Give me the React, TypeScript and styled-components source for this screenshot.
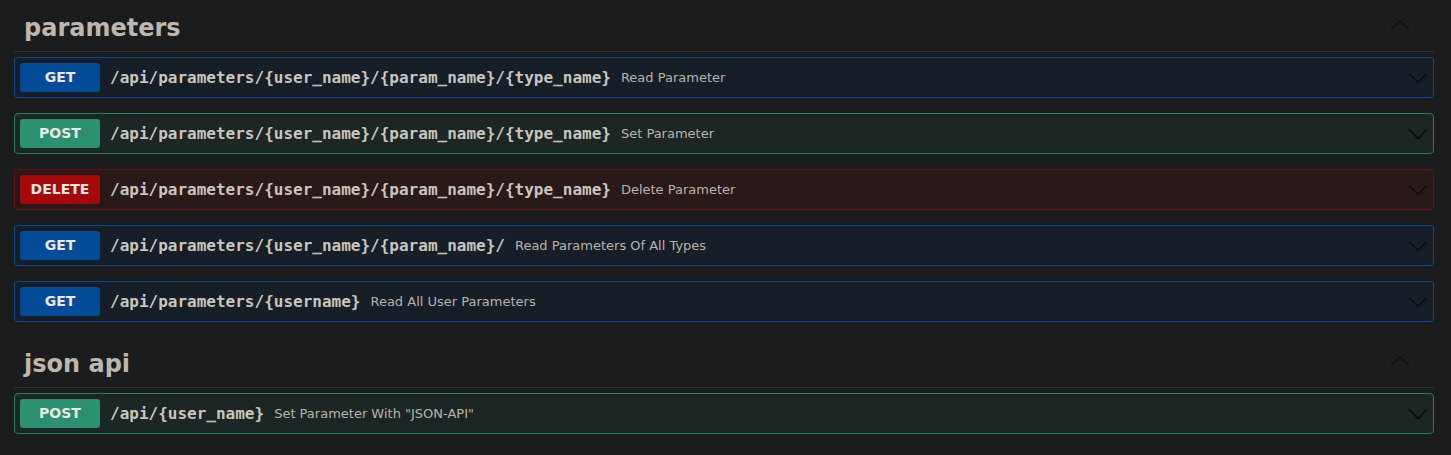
import React from "react";
import styled, { createGlobalStyle } from "styled-components";

type Method = "GET" | "POST" | "DELETE";

const methodColors: Record<Method, { badge: string; bg: string; border: string }> = {
  GET: { badge: "#044c98", bg: "#161e28", border: "#0d4a8c" },
  POST: { badge: "#2a9070", bg: "#1c2624", border: "#2b7c5c" },
  DELETE: { badge: "#a40808", bg: "#291919", border: "#6c0f0f" },
};

const sections: { name: string; ops: { method: Method; path: string; summary: string }[] }[] = [
  {
    name: "parameters",
    ops: [
      { method: "GET", path: "/api/parameters/{user_name}/{param_name}/{type_name}", summary: "Read Parameter" },
      { method: "POST", path: "/api/parameters/{user_name}/{param_name}/{type_name}", summary: "Set Parameter" },
      { method: "DELETE", path: "/api/parameters/{user_name}/{param_name}/{type_name}", summary: "Delete Parameter" },
      { method: "GET", path: "/api/parameters/{user_name}/{param_name}/", summary: "Read Parameters Of All Types" },
      { method: "GET", path: "/api/parameters/{username}", summary: "Read All User Parameters" },
    ],
  },
  {
    name: "json api",
    ops: [{ method: "POST", path: "/api/{user_name}", summary: 'Set Parameter With "JSON-API"' }],
  },
];

const GlobalStyle = createGlobalStyle`
  html, body {
    margin: 0;
    padding: 0;
    background: #1b1c1e;
  }
  body {
    font-family: "DejaVu Sans", sans-serif;
    color: #c8c3bb;
  }
`;

const Wrapper = styled.div`
  padding: 1px 17px 0 14px;
`;

const Section = styled.section`
  display: flex;
  flex-direction: column;
`;

const TagHeading = styled.h3`
  margin: 0 0 5px;
  padding: 12px 24px 8px 10px;
  display: flex;
  align-items: center;
  justify-content: space-between;
  font-family: "DejaVu Sans", sans-serif;
  font-size: 24px;
  font-weight: bold;
  line-height: 30px;
  color: #bdb7ad;
  border-bottom: 1px solid #34363a;
`;

const OpBlock = styled.div<{ $method: Method }>`
  margin: 0 0 15px;
  border: 1px solid ${(p) => methodColors[p.$method].border};
  border-radius: 4px;
  background: ${(p) => methodColors[p.$method].bg};
`;

const Summary = styled.div`
  display: flex;
  align-items: center;
  padding: 5px;
`;

const Badge = styled.span<{ $method: Method }>`
  min-width: 80px;
  padding: 6px 0;
  line-height: 17px;
  text-align: center;
  border-radius: 3px;
  font-family: "DejaVu Sans", sans-serif;
  font-size: 14px;
  font-weight: bold;
  color: #ece9e4;
  background: ${(p) => methodColors[p.$method].badge};
`;

const Path = styled.span`
  padding: 0 10px;
  font-family: "DejaVu Sans Mono", monospace;
  font-size: 16px;
  font-weight: bold;
  color: #c9c5bd;
`;

const Description = styled.span`
  flex: 1;
  font-size: 13px;
  color: #b9b3aa;
`;

const Chevron = styled.svg`
  width: 20px;
  height: 20px;
  flex-shrink: 0;
`;

const ArrowDown = () => (
  <Chevron viewBox="0 0 20 20">
    <path d="M1 5.5 L10 14.5 L19 5.5" fill="none" stroke="#0c0c0c" strokeWidth="1.6" />
  </Chevron>
);

const ArrowUp = () => (
  <Chevron viewBox="0 0 20 20">
    <path d="M1 11.5 L10 3 L19 11.5" fill="none" stroke="#0c0c0c" strokeWidth="1.6" />
  </Chevron>
);

export default function App() {
  return (
    <Wrapper>
      <GlobalStyle />
      {sections.map((section) => (
        <Section key={section.name}>
          <TagHeading>
            <span>{section.name}</span>
            <ArrowUp />
          </TagHeading>
          {section.ops.map((op, i) => (
            <OpBlock key={i} $method={op.method}>
              <Summary>
                <Badge $method={op.method}>{op.method}</Badge>
                <Path>{op.path}</Path>
                <Description>{op.summary}</Description>
                <ArrowDown />
              </Summary>
            </OpBlock>
          ))}
        </Section>
      ))}
    </Wrapper>
  );
}
